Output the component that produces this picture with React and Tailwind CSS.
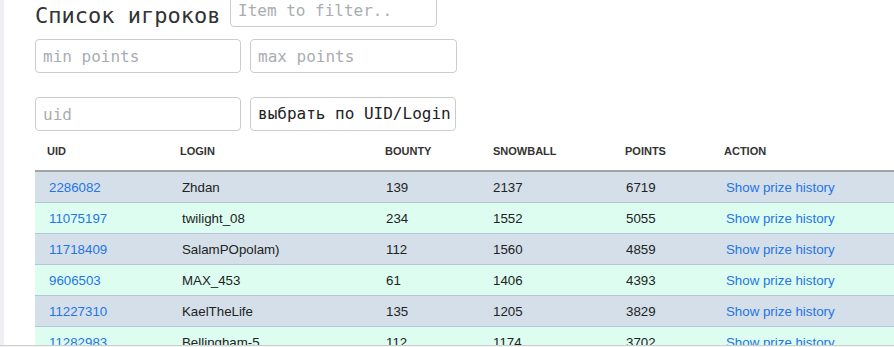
import React from "react";

const rows = [
  ["2286082", "Zhdan", "139", "2137", "6719"],
  ["11075197", "twilight_08", "234", "1552", "5055"],
  ["11718409", "SalamPOpolam)", "112", "1560", "4859"],
  ["9606503", "MAX_453", "61", "1406", "4393"],
  ["11227310", "KaelTheLife", "135", "1205", "3829"],
  ["11282983", "Bellingham-5", "112", "1174", "3702"],
];

const mono = { fontFamily: '"DejaVu Sans Mono", "Liberation Mono", monospace' };

export default function App() {
  return (
    <div className="w-[894px] h-[347px] overflow-hidden bg-white flex flex-col" style={{ fontFamily: '"Liberation Sans", Arial, sans-serif' }}>
      <div className="h-[345px] flex overflow-hidden">
        <div className="w-[4px] shrink-0 bg-[#eef0f4]" />
        <div className="flex-1 min-w-0 pl-[31px] flex flex-col">
          <div className="flex items-center mt-[-7px] h-[34px]">
            <div className="w-[195px] text-[22px] leading-none text-[#333] mt-[11px]" style={mono}>
              Список игроков
            </div>
            <input
              className="w-[207px] h-[34px] border border-[#ccc] rounded-[4px] px-[7px] text-[16px] text-[#333] placeholder:text-[#a9adb2] outline-none"
              style={mono}
              placeholder="Item to filter.."
            />
          </div>
          <div className="flex gap-[9px] mt-[12px]">
            <input
              className="w-[206px] h-[34px] border border-[#ccc] rounded-[4px] px-[7px] text-[16px] placeholder:text-[#a9adb2] outline-none"
              style={mono}
              placeholder="min points"
            />
            <input
              className="w-[207px] h-[34px] border border-[#ccc] rounded-[4px] px-[7px] text-[16px] placeholder:text-[#a9adb2] outline-none"
              style={mono}
              placeholder="max points"
            />
          </div>
          <div className="flex gap-[9px] mt-[24px]">
            <input
              className="w-[206px] h-[34px] border border-[#ccc] rounded-[4px] px-[7px] text-[16px] placeholder:text-[#a9adb2] outline-none"
              style={mono}
              placeholder="uid"
            />
            <button
              className="w-[206px] h-[34px] border border-[#ccc] rounded-[4px] px-[7px] text-[16px] text-[#222] bg-white text-left whitespace-nowrap"
              style={mono}
            >
              выбрать по UID/Login
            </button>
          </div>
          <div className="w-[900px]">
            <div className="grid grid-cols-[133px_205px_108px_132px_99px_1fr] h-[41px] items-center border-b-2 border-[#a3a3a3] text-[11px] font-bold text-[#333] pt-[1px]">
              <div className="pl-[12px]">UID</div>
              <div className="pl-[12px]">LOGIN</div>
              <div className="pl-[12px]">BOUNTY</div>
              <div className="pl-[12px]">SNOWBALL</div>
              <div className="pl-[12px]">POINTS</div>
              <div className="pl-[12px]">ACTION</div>
            </div>
            {rows.map((r, i) => (
              <div
                key={r[0]}
                className={`grid grid-cols-[133px_205px_108px_132px_99px_1fr] h-[31px] items-center pt-[2px] border-b border-[#b8c5d9] text-[13.3px] text-[#222] ${i % 2 === 0 ? "bg-[#d4dfe9]" : "bg-[#dcfdf0]"}`}
              >
                <div className="pl-[14px] text-[#2575e3]">{r[0]}</div>
                <div className="pl-[14px]">{r[1]}</div>
                <div className="pl-[13px]">{r[2]}</div>
                <div className="pl-[12px]">{r[3]}</div>
                <div className="pl-[13px]">{r[4]}</div>
                <div className="pl-[14px] text-[#2575e3] whitespace-nowrap">Show prize history</div>
              </div>
            ))}
          </div>
        </div>
      </div>
      <div className="h-[1px] bg-[#cfcfcf]" />
      <div className="h-[1px] bg-[#f4f4f4]" />
    </div>
  );
}
